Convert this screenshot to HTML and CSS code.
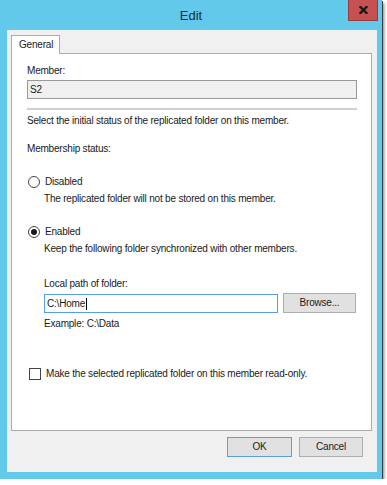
FILE: index.html
```html
<!DOCTYPE html>
<html lang="en">

<head>
    <meta charset="UTF-8">
    <meta name="viewport" content="width=device-width, initial-scale=1.0">
    <title>Edit</title>
    <link rel="stylesheet" href="styles.css">
</head>

<body>
    <div class="window">
        <div class="titlebar">
            <span></span>
            <div class="title">Edit</div>
            <button class="close" aria-label="Close">
                <svg width="9" height="8" viewBox="0 0 9 8">
                    <path d="M1.5 1 L7.5 7 M7.5 1 L1.5 7" stroke="#1a1a1a" stroke-width="2.4" stroke-linecap="square" />
                </svg>
            </button>
        </div>

        <div class="client">
            <div class="tabs">
                <div class="tab">General</div>
            </div>

            <div class="panel">
                <div class="line">Member:</div>
                <div class="field readonly">S2</div>
                <div class="separator"></div>

                <div class="line intro">Select the initial status of the replicated folder on this member.</div>
                <div class="line status-label">Membership status:</div>

                <div class="option">
                    <span class="radio"></span>
                    <span>Disabled</span>
                </div>
                <div class="line hint">The replicated folder will not be stored on this member.</div>

                <div class="option">
                    <span class="radio checked"></span>
                    <span>Enabled</span>
                </div>
                <div class="line hint">Keep the following folder synchronized with other members.</div>

                <div class="path">
                    <div class="line">Local path of folder:</div>
                    <div class="path-row">
                        <div class="field focused">C:\Home<span class="caret"></span></div>
                        <button class="btn browse">Browse...</button>
                    </div>
                    <div class="line example">Example: C:\Data</div>
                </div>

                <div class="check-row">
                    <span class="checkbox"></span>
                    <span>Make the selected replicated folder on this member read-only.</span>
                </div>
            </div>

            <div class="actions">
                <button class="btn ok">OK</button>
                <button class="btn cancel">Cancel</button>
            </div>
        </div>
    </div>
</body>

</html>
```

FILE: styles.css
```css
* {
    box-sizing: border-box;
}

body {
    margin: 0;
    background-color: white;
    font-family: 'Liberation Sans', Arial, sans-serif;
    font-size: 10px;
    line-height: 13px;
    letter-spacing: -0.2px;
    color: #1a1a1a;
}

.window {
    width: 382px;
    height: 479px;
    background-color: #62c9ea;
    box-shadow: 1px 1px 0 #3c3c3c, 2px 3px 3px rgba(0, 0, 0, 0.5);
}

.titlebar {
    height: 30px;
    display: grid;
    grid-template-columns: 1fr auto 1fr;
    align-items: start;
}

.title {
    font-size: 13px;
    line-height: 16px;
    padding-top: 8px;
    letter-spacing: 0;
    color: #1e2a33;
}

.close {
    justify-self: end;
    margin-right: 4px;
    width: 30px;
    height: 21px;
    padding: 0;
    background-color: #c75050;
    border: 1px solid #9a3b3b;
    border-top: none;
    display: flex;
    align-items: center;
    justify-content: center;
}

.client {
    margin-left: 7px;
    width: 370px;
    height: 442px;
    background-color: #f0f0f0;
    padding: 5px 0 0 4px;
}

.tabs {
    display: flex;
}

.tab {
    position: relative;
    z-index: 1;
    width: 49px;
    height: 19px;
    margin-bottom: -1px;
    padding-left: 7px;
    line-height: 18px;
    background-color: white;
    border: 1px solid #acacac;
    border-bottom: none;
}

.panel {
    width: 361px;
    height: 378px;
    background-color: white;
    border: 1px solid #acacac;
    padding: 10px 14px 0 15px;
}

.field {
    height: 19px;
    padding: 0 2px;
    line-height: 17px;
    border: 1px solid #9a9a9a;
}

.field.readonly {
    margin-top: 3px;
    background-color: #f0f0f0;
}

.separator {
    height: 2px;
    margin-top: 9px;
    background-color: #cfcfcf;
}

.intro {
    margin-top: 4px;
}

.status-label {
    margin-top: 15px;
}

.option {
    display: flex;
    align-items: center;
    gap: 5px;
    margin-top: 20px;
    margin-left: 1px;
}

.radio {
    width: 12px;
    height: 12px;
    border: 1px solid #444;
    border-radius: 50%;
    background-color: white;
    display: flex;
    align-items: center;
    justify-content: center;
}

.radio.checked::after {
    content: "";
    width: 6px;
    height: 6px;
    border-radius: 50%;
    background-color: #1a1a1a;
}

.hint {
    margin-top: 4px;
    margin-left: 17px;
}

.path {
    margin-top: 22px;
    margin-left: 17px;
}

.path-row {
    display: flex;
    align-items: flex-end;
    gap: 5px;
    margin-top: 3px;
}

.field.focused {
    width: 234px;
    border-color: #569de5;
}

.caret {
    display: inline-block;
    width: 1px;
    height: 12px;
    margin-left: 1px;
    vertical-align: middle;
    background-color: black;
}

.example {
    margin-top: 4px;
}

.btn {
    height: 20px;
    padding: 0;
    font-family: inherit;
    font-size: 10px;
    line-height: 18px;
    letter-spacing: inherit;
    color: #1a1a1a;
    background-color: #e1e1e1;
    border: 1px solid #adadad;
}

.browse {
    width: 73px;
}

.check-row {
    display: flex;
    align-items: center;
    gap: 5px;
    margin-top: 37px;
    margin-left: 2px;
}

.checkbox {
    width: 12px;
    height: 12px;
    border: 1px solid #444;
    background-color: white;
}

.actions {
    display: flex;
    justify-content: flex-end;
    gap: 7px;
    margin-top: 6px;
    padding-right: 14px;
}

.ok {
    width: 65px;
    border-color: #5c9fe0;
}

.cancel {
    width: 64px;
}
```
